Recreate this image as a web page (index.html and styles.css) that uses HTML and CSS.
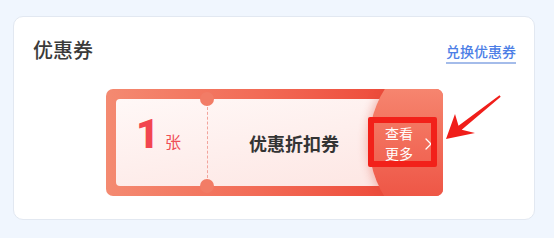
FILE: index.html
```html
<!DOCTYPE html>
<html lang="zh">
<head>
<meta charset="utf-8">
<link rel="stylesheet" href="styles.css">
</head>
<body>
<div class="card">
  <div class="card-head">
    <h2 class="title">优惠券</h2>
    <a class="link">兑换优惠券</a>
  </div>
  <div class="coupon">
    <div class="ticket">
      <div class="count"><span class="num">1</span><span class="unit">张</span></div>
      <div class="divider"></div>
      <div class="name">优惠折扣券</div>
    </div>
    <div class="more">
      <div class="more-text"><span>查看</span><span>更多</span></div>
      <svg class="chev" width="7" height="12" viewBox="0 0 7 12"><polyline points="1,1 6,6 1,11" fill="none" stroke="#fff" stroke-width="1.3" stroke-linecap="round" stroke-linejoin="round"/></svg>
    </div>
    <div class="notch notch-top"></div>
    <div class="notch notch-bottom"></div>
    <div class="highlight"></div>
  </div>
  <svg class="arrow" width="60" height="50" viewBox="443 92 60 50">
    <polygon points="446,139 455,114 458.5,125.8 499.5,95.2 500.7,96.8 461.7,129.8 475,133" fill="#f01e1a"/>
  </svg>
</div>
</body>
</html>
```

FILE: styles.css
```css
* { box-sizing: border-box; }
html, body { margin: 0; }
body {
  width: 554px;
  height: 238px;
  background: #f0f6fe;
  padding: 16px 19px 0 13px;
  font-family: "Noto Sans CJK SC", "Noto Sans", sans-serif;
}
.card {
  position: relative;
  width: 522px;
  height: 204px;
  background: #fff;
  border: 1px solid #e2e8f1;
  border-radius: 10px;
  padding: 21px 18px 0 19px;
}
.card-head {
  display: flex;
  justify-content: space-between;
  align-items: center;
  height: 24px;
}
.title {
  margin: 0;
  font-size: 20px;
  line-height: 24px;
  font-weight: 500;
  color: #3a3a3a;
}
.link {
  font-size: 14px;
  line-height: 16px;
  font-weight: 500;
  color: #4c7ee6;
  padding-bottom: 3px;
  border-bottom: 2px solid #a4bcea;
  margin-top: 7px;
}
.coupon {
  position: relative;
  overflow: hidden;
  width: 337px;
  height: 107px;
  margin: 27px auto 0;
  padding: 10px 0 10px 10px;
  border-radius: 7px;
  background: linear-gradient(90deg, #f48a71 0%, #f26b56 45%, #ee4e3d 80%, #ee4e3d 100%);
}
.ticket {
  display: flex;
  align-items: stretch;
  width: 280px;
  height: 87px;
  border-radius: 4px;
  background: linear-gradient(170deg, #fff8f7 0%, #fde6e3 100%);
}
.count {
  width: 91px;
  display: flex;
  justify-content: center;
  align-items: baseline;
  padding: 14px 6px 0 0;
  gap: 6px;
}
.num {
  font-family: Roboto, "Liberation Sans", Arial, sans-serif;
  font-weight: 900;
  font-size: 40px;
  line-height: 44px;
  color: #f2454f;
}
.unit {
  font-size: 16px;
  color: #ef4f57;
}
.divider {
  width: 0;
  margin: 8px 0;
  border-left: 1px dashed #f2a49c;
}
.name {
  width: 172px;
  display: flex;
  align-items: center;
  justify-content: center;
  font-size: 18px;
  font-weight: 700;
  color: #343434;
}
.notch {
  position: absolute;
  left: 94px;
  width: 14px;
  height: 14px;
  border-radius: 50%;
  background: #f27c66;
}
.notch-top { top: 3px; }
.notch-bottom { top: 90px; }
.more {
  position: absolute;
  left: 263px;
  top: -46px;
  width: 200px;
  height: 200px;
  border-radius: 50%;
  background: linear-gradient(180deg, #fa9a82 0%, #f47a65 35%, #f0604f 65%, #ea4434 100%);
  box-shadow: -3px 0 8px rgba(214, 70, 52, 0.3);
  display: flex;
  align-items: center;
  padding-left: 16px;
  gap: 12px;
}
.more-text {
  display: flex;
  flex-direction: column;
  font-size: 14px;
  line-height: 20px;
  color: #fff;
}
.chev { margin-top: 1px; }
.highlight {
  position: absolute;
  left: 262px;
  top: 28px;
  width: 69px;
  height: 50px;
  border: 6px solid #f2211a;
  border-radius: 2px;
}
.arrow {
  position: absolute;
  left: 429px;
  top: 75px;
}
```
